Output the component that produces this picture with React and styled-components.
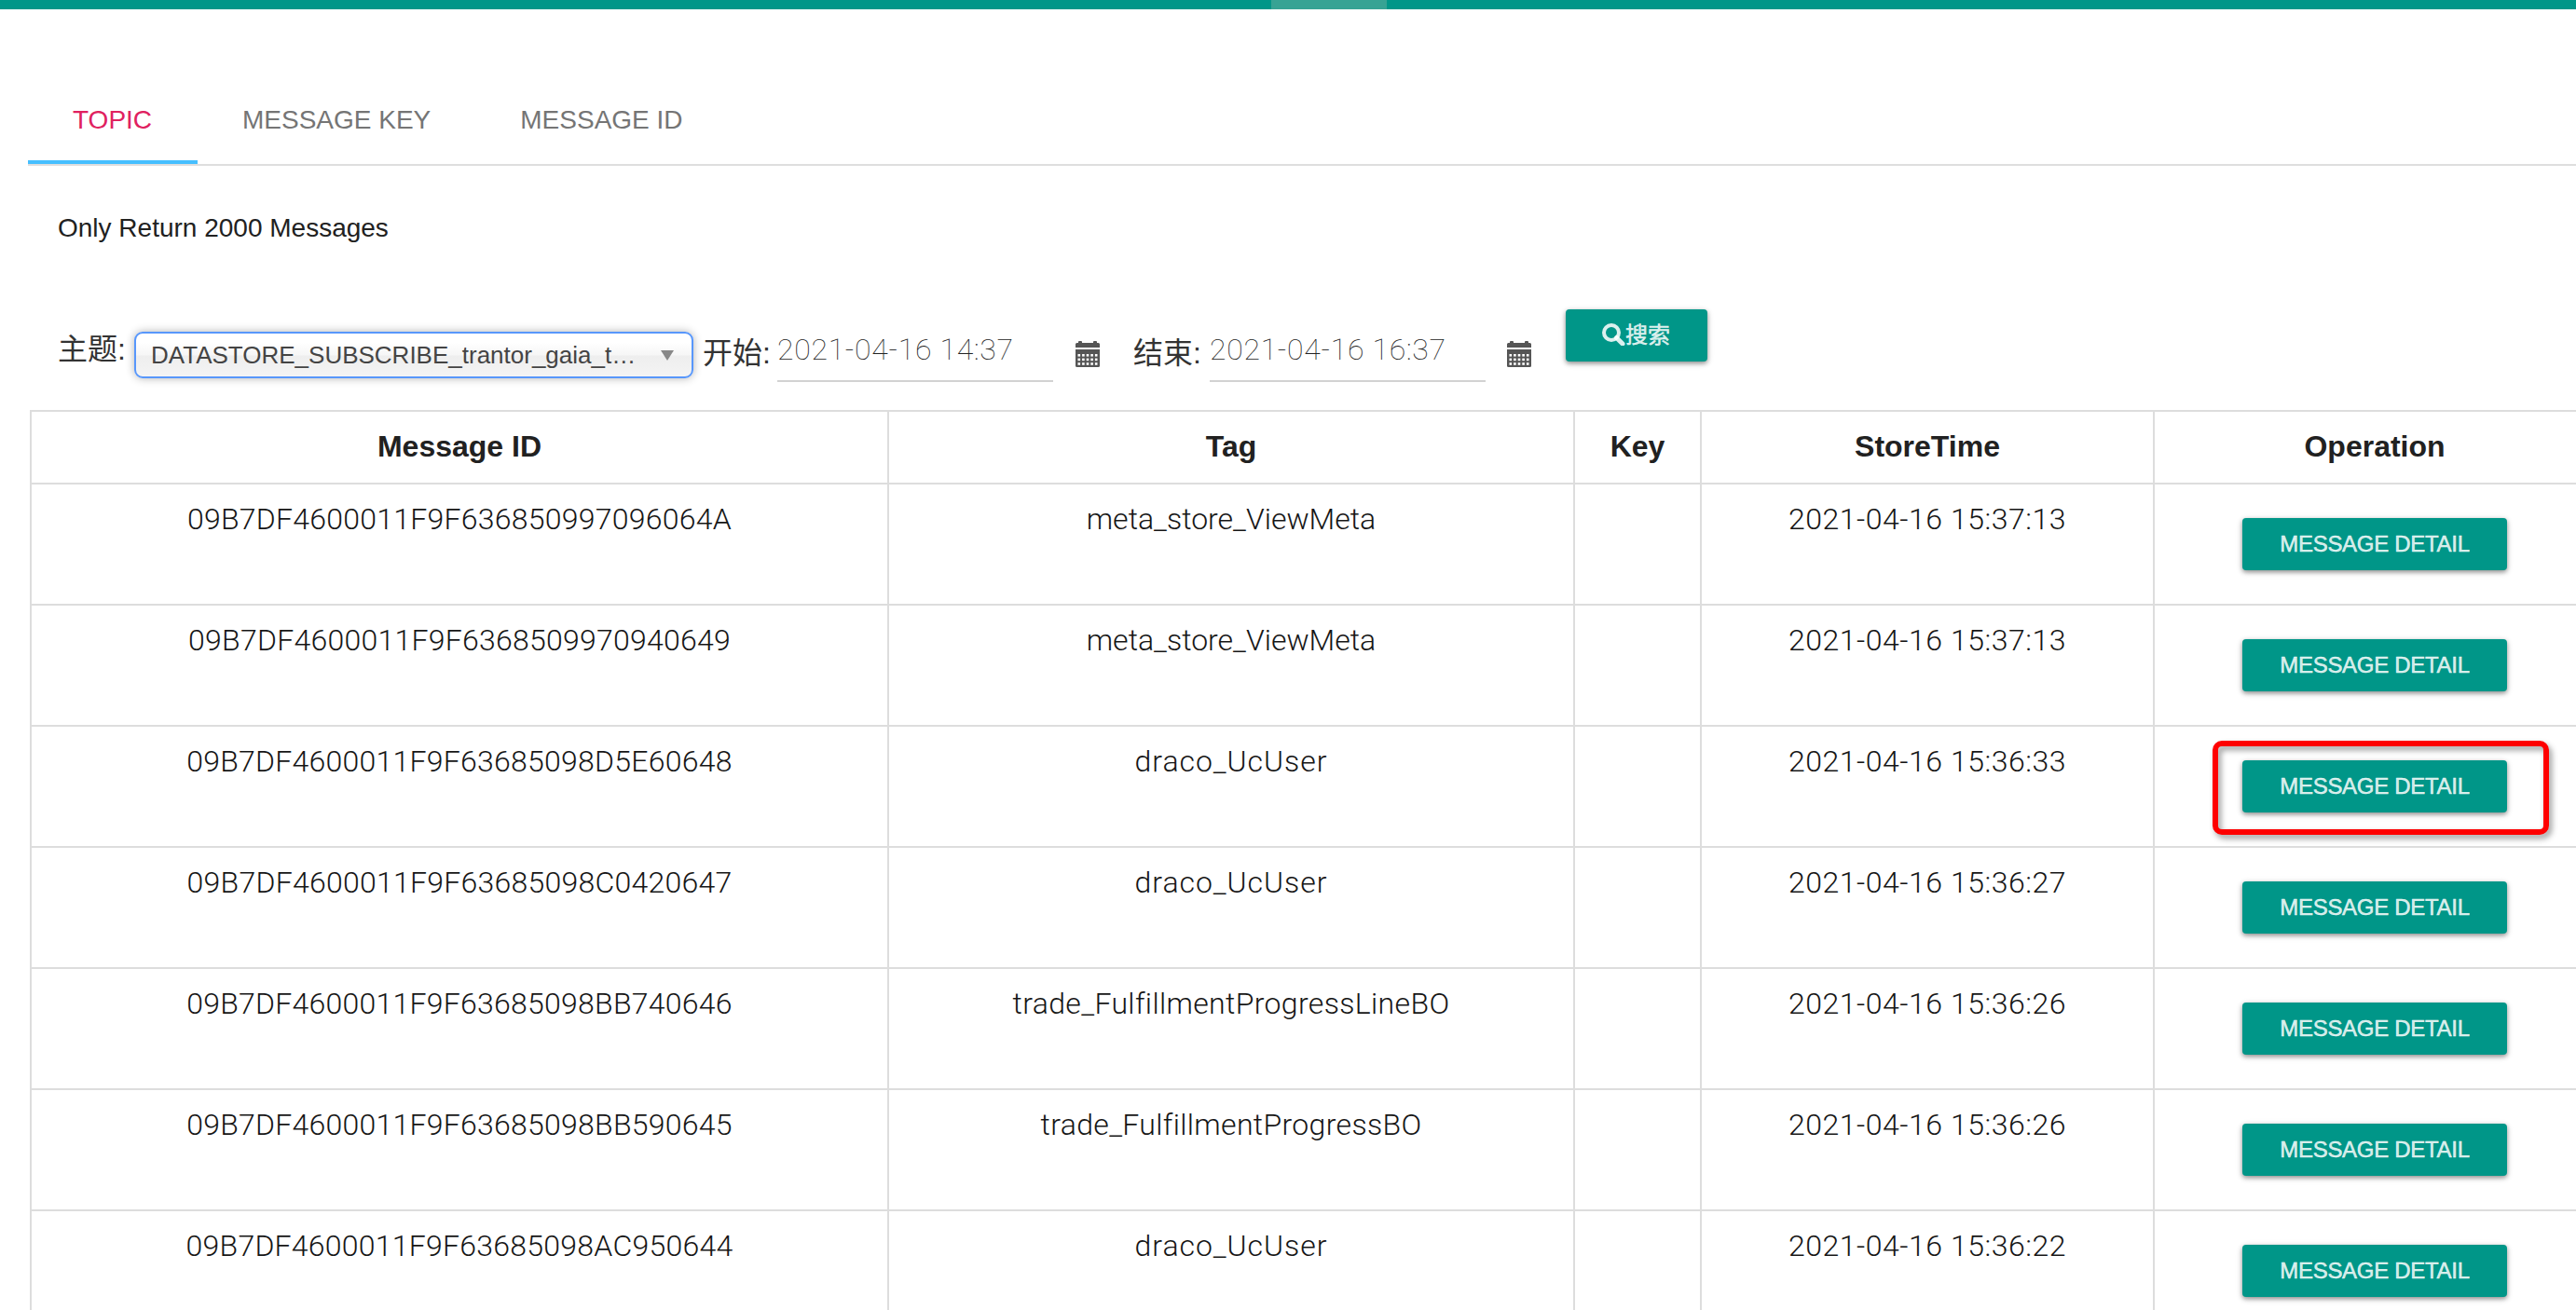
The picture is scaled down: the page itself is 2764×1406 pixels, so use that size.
import React from 'react';
import styled, { createGlobalStyle } from 'styled-components';

const GlobalStyle = createGlobalStyle`
  * { box-sizing: border-box; }
  html, body { margin: 0; background: #fff; overflow: hidden; }
  body {
    font-family: "Liberation Sans", "Noto Sans CJK SC", sans-serif;
    color: #212121;
  }
`;

const Page = styled.div`
  height: 1406px;
  overflow: hidden;
  display: flex;
  flex-direction: column;
`;

const TopBar = styled.header`
  height: 10px;
  flex: none;
  background: #009688;
  padding-left: 1364px;
`;

const ActiveNav = styled.div`
  width: 124px;
  height: 10px;
  background: #37a394;
`;

const Tabs = styled.nav`
  display: flex;
  flex: none;
  margin: 70px 0 0 30px;
  height: 98px;
  border-bottom: 2px solid #dedede;
`;

const Tab = styled.div`
  min-width: 182px;
  padding: 0 48px;
  line-height: 98px;
  height: 96px;
  font-size: 28px;
  color: ${(p) => (p.$active ? '#e0215f' : '#757575')};
  border-bottom: ${(p) => (p.$active ? '4px solid #46bfff' : '0')};
`;

const Notice = styled.p`
  margin: 51px 0 0 62px;
  height: 32px;
  line-height: 32px;
  font-size: 28px;
`;

const Filters = styled.form`
  display: flex;
  flex: none;
  align-items: flex-start;
  margin: 71px 0 52px 62px;
  height: 56px;
`;

const Label = styled.label`
  width: ${(p) => p.$w}px;
  margin-top: ${(p) => p.$top}px;
  font-size: 32px;
  line-height: 36px;
  color: #333;
  white-space: nowrap;
`;

const Select = styled.div`
  display: flex;
  align-items: center;
  width: 600px;
  height: 50px;
  margin: 24px 10px 0 0;
  padding: 0 19px 0 16px;
  border: 2px solid #5897fb;
  border-radius: 9px;
  background: linear-gradient(#fff 20%, #f6f6f6 50%, #eee 52%, #f4f4f4 100%);
  box-shadow: 0 0 10px rgba(0, 0, 0, 0.3);
  font-size: 26px;
  color: #444;
`;

const SelectText = styled.span`
  flex: 1;
  line-height: 46px;
  white-space: nowrap;
`;

const Caret = styled.span`
  border-left: 7px solid transparent;
  border-right: 7px solid transparent;
  border-top: 11px solid #888;
`;

const DateInput = styled.div`
  width: 296px;
  height: 56px;
  margin-top: 22px;
  border-bottom: 2px solid #d2d2d2;
  font-family: Roboto, "Liberation Sans", sans-serif;
  font-weight: 100;
  font-size: 32px;
  line-height: 42px;
  letter-spacing: 0.7px;
  color: #222;
`;

const CalendarIcon = styled.svg`
  display: block;
  width: 26px;
  height: 28px;
  margin: 34px ${(p) => p.$after}px 0 ${(p) => p.$before}px;
  fill: #555;
`;

const Button = styled.button`
  display: flex;
  align-items: center;
  justify-content: center;
  width: ${(p) => p.$w}px;
  height: 56px;
  padding: 0;
  border: 0;
  border-radius: 4px;
  background: #009688;
  box-shadow: 0 2px 5px rgba(0, 0, 0, 0.42), 0 2px 10px rgba(0, 0, 0, 0.08);
  color: rgba(255, 255, 255, 0.84);
  font: 24px/56px "Liberation Sans", "Noto Sans CJK SC", sans-serif;
  letter-spacing: ${(p) => p.$spacing || 0}px;
  -webkit-text-stroke: 0.5px currentColor;
`;

const SearchIcon = styled.svg`
  width: 25px;
  height: 24px;
  margin: -3px 0 0 -1px;
  fill: none;
  stroke: rgba(255, 255, 255, 0.86);
`;

const Table = styled.div`
  width: 2754px;
  flex: none;
  margin-left: 32px;
  border: solid #ddd;
  border-width: 2px 0 0 2px;
`;

const Row = styled.div`
  display: grid;
  grid-template-columns: 920px 736px 136px 486px 474px;
  height: ${(p) => (p.$head ? 78 : 130)}px;
`;

const HeadCell = styled.div`
  border: solid #ddd;
  border-width: 0 2px 2px 0;
  text-align: center;
  font-size: 32px;
  font-weight: 700;
  line-height: 74px;
`;

const Cell = styled.div`
  border: solid #ddd;
  border-width: 0 2px 2px 0;
  padding-top: 16px;
  text-align: center;
  font-family: Roboto, "Liberation Sans", sans-serif;
  font-weight: 300;
  font-size: 32px;
  line-height: 42px;
  letter-spacing: ${(p) => p.$spacing || 0}px;
  color: #161616;
`;

const ActionCell = styled.div`
  position: relative;
  display: flex;
  justify-content: center;
  align-items: flex-start;
  padding-top: 36px;
  border: solid #ddd;
  border-width: 0 2px 2px 0;
`;

const Highlight = styled.div`
  position: absolute;
  left: 62px;
  top: 15px;
  width: 361px;
  height: 101px;
  border: 6px solid #fe0000;
  border-radius: 10px;
  filter: drop-shadow(3px 4px 3px rgba(0, 0, 0, 0.4));
`;

const tags = {
  view: { name: 'meta_store_ViewMeta', spacing: 0 },
  user: { name: 'draco_UcUser', spacing: 0.95 },
  line: { name: 'trade_FulfillmentProgressLineBO', spacing: 0.35 },
  progress: { name: 'trade_FulfillmentProgressBO', spacing: 0.34 },
};

const rows = [
  ['09B7DF4600011F9F636850997096064A', tags.view, '2021-04-16 15:37:13'],
  ['09B7DF4600011F9F6368509970940649', tags.view, '2021-04-16 15:37:13'],
  ['09B7DF4600011F9F63685098D5E60648', tags.user, '2021-04-16 15:36:33', true],
  ['09B7DF4600011F9F63685098C0420647', tags.user, '2021-04-16 15:36:27'],
  ['09B7DF4600011F9F63685098BB740646', tags.line, '2021-04-16 15:36:26'],
  ['09B7DF4600011F9F63685098BB590645', tags.progress, '2021-04-16 15:36:26'],
  ['09B7DF4600011F9F63685098AC950644', tags.user, '2021-04-16 15:36:22'],
];

const holes = [];
for (let r = 0; r < 3; r += 1) {
  for (let c = 0; c < 5; c += 1) holes.push([2.5 + c * 4.6, 14 + r * 4.6]);
}

const Calendar = ({ before, after }) => (
  <CalendarIcon viewBox="0 0 26 28" $before={before} $after={after}>
    <path d="M0 7V3.5Q0 2 1.5 2H3V1q0-1 1-1h2q1 0 1 1v1h12V1q0-1 1-1h2q1 0 1 1v1h1.500q1.500 0 1.500 1.500V7z" />
    <path d="M0 9h26v17.500q0 1.500-1.500 1.500h-23Q0 28 0 26.500z" />
    {holes.map(([x, y]) => (
      <rect key={`${x}-${y}`} x={x} y={y} width="2.6" height="2.6" fill="#fff" />
    ))}
  </CalendarIcon>
);

export default function App() {
  return (
    <Page>
      <GlobalStyle />
      <TopBar>
        <ActiveNav />
      </TopBar>
      <Tabs>
        <Tab $active>TOPIC</Tab>
        <Tab>MESSAGE KEY</Tab>
        <Tab>MESSAGE ID</Tab>
      </Tabs>
      <Notice>Only Return 2000 Messages</Notice>
      <Filters>
        <Label $w={82} $top={25}>主题:</Label>
        <Select>
          <SelectText>DATASTORE_SUBSCRIBE_trantor_gaia_t…</SelectText>
          <Caret />
        </Select>
        <Label $w={80} $top={29}>开始:</Label>
        <DateInput>2021-04-16 14:37</DateInput>
        <Calendar before={24} after={36} />
        <Label $w={82} $top={29}>结束:</Label>
        <DateInput>2021-04-16 16:37</DateInput>
        <Calendar before={23} after={37} />
        <Button type="button" $w={152}>
          <SearchIcon viewBox="0 0 25 24">
            <circle cx="10" cy="10" r="8" strokeWidth="4" />
            <path d="M15.500 15.500 22 22" strokeWidth="5" strokeLinecap="round" />
          </SearchIcon>
          搜索
        </Button>
      </Filters>
      <Table>
        <Row $head>
          <HeadCell>Message ID</HeadCell>
          <HeadCell>Tag</HeadCell>
          <HeadCell>Key</HeadCell>
          <HeadCell>StoreTime</HeadCell>
          <HeadCell>Operation</HeadCell>
        </Row>
        {rows.map(([id, tag, time, marked]) => (
          <Row key={id}>
            <Cell $spacing={0.25}>{id}</Cell>
            <Cell $spacing={tag.spacing}>{tag.name}</Cell>
            <Cell />
            <Cell $spacing={0.52}>{time}</Cell>
            <ActionCell>
              <Button type="button" $w={284} $spacing={-0.3}>MESSAGE DETAIL</Button>
              {marked && <Highlight />}
            </ActionCell>
          </Row>
        ))}
      </Table>
    </Page>
  );
}
